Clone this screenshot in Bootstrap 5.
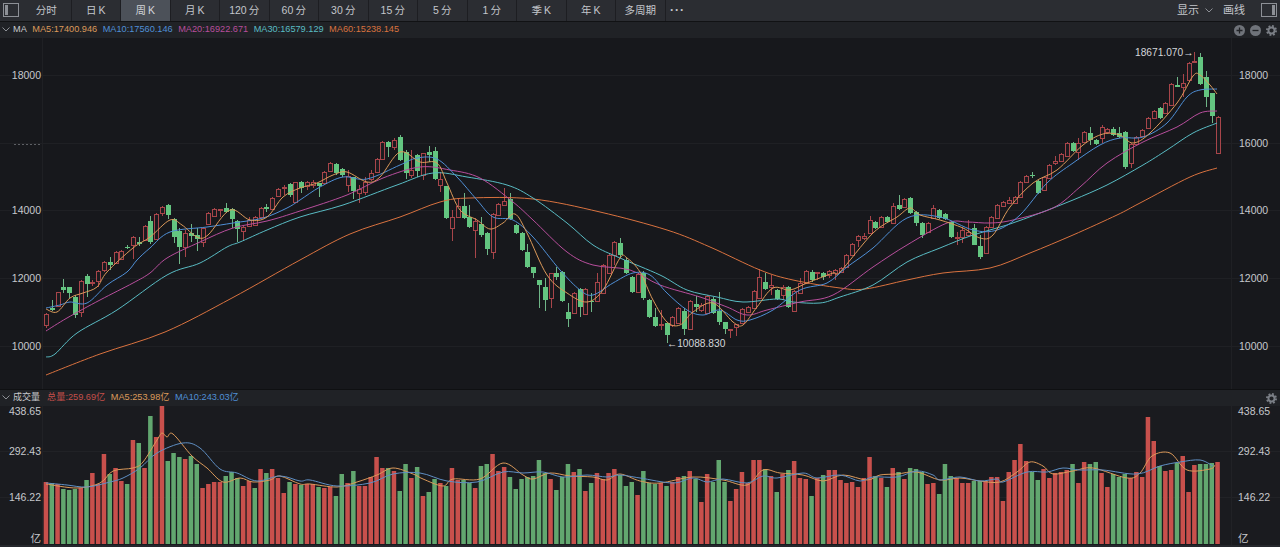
<!DOCTYPE html>
<html lang="zh-CN">
<head>
<meta charset="utf-8">
<title>周K</title>
<link href="https://cdn.jsdelivr.net/npm/bootstrap@5.3.0/dist/css/bootstrap.min.css" rel="stylesheet">
<style>
html,body{height:547px;overflow:hidden;background:#17181c;}
body{font-family:"Liberation Sans","Noto Sans CJK SC",sans-serif;font-size:9.2px;color:#b9bcc2;line-height:1;}
.tool-bar{height:22px;background:#2b2d32;border-bottom:1px solid #111214;}
.tool-tab{width:49.5px;height:21px;padding:0;border:0;border-radius:0;border-right:1px solid #1d1e22;background:transparent;color:#c3c6cb;font-size:10.5px;line-height:21px;font-family:inherit;}
.tool-tab.is-on{background:#4c5159;color:#d2d4d8;}
.tool-more{width:24px;font-weight:700;letter-spacing:1px;border-right:0;font-size:12px;}
.tool-side{width:22px;height:21px;padding:3px 3px;}
.tool-text{color:#c3c6cb;font-size:11px;}
.gap-chev{margin:0 6px;}
.gap-line{margin-right:13px;}
.legend-row{height:16px;background:#202226;padding:0 3px 0 2px;}
.legend-gap{column-gap:5.5px;}
.chev-lead{margin-right:-2.500px;}
.head-vol{font-size:9px;margin-right:1.500px;}
.pane-main{height:351px;background:#17181c;}
.pane-vol{height:139px;background:#1a1b1f;}
.pane-sep{height:1px;background:#0f1012;}
.foot-strip{height:3px;background:#25272c;}
.svg-fill{display:block;width:1280px;height:100%;}
.axis-label{font-family:"Liberation Sans","Noto Sans CJK SC",sans-serif;font-size:10.5px;fill:#c6c8cc;}
.peak-label{font-family:"Liberation Sans",sans-serif;font-size:10.2px;fill:#d4d6da;}
.c-ma5{color:#dc9a5a;}.c-ma10{color:#4f8fd6;}.c-ma20{color:#b84e9c;}.c-ma30{color:#59bcc4;}.c-ma60{color:#d9723f;}.c-tot{color:#c44f4a;}
.c-head{color:#c6c8cc;}
.icon-box{width:16px;height:14px;display:block;}
.icon-round{width:11px;height:11px;display:block;}
.ic-wrap{column-gap:5px;}
.chev{width:8px;height:5px;display:block;}
</style>
</head>
<body class="m-0">
<div class="tool-bar d-flex align-items-center justify-content-between">
  <div class="d-flex align-items-center">
    <div class="tool-side">
      <svg class="icon-box" viewBox="0 0 16 14"><rect x=".5" y=".5" width="15" height="13" fill="none" stroke="#8d9096"/><rect x="2" y="2" width="3" height="10" fill="#8d9096"/></svg>
    </div>
    <button class="btn tool-tab" type="button">分时</button>
    <button class="btn tool-tab" type="button">日&#8201;K</button>
    <button class="btn tool-tab is-on" type="button">周&#8201;K</button>
    <button class="btn tool-tab" type="button">月&#8201;K</button>
    <button class="btn tool-tab" type="button">120&#8201;分</button>
    <button class="btn tool-tab" type="button">60&#8201;分</button>
    <button class="btn tool-tab" type="button">30&#8201;分</button>
    <button class="btn tool-tab" type="button">15&#8201;分</button>
    <button class="btn tool-tab" type="button">5&#8201;分</button>
    <button class="btn tool-tab" type="button">1&#8201;分</button>
    <button class="btn tool-tab" type="button">季&#8201;K</button>
    <button class="btn tool-tab" type="button">年&#8201;K</button>
    <button class="btn tool-tab" type="button">多周期</button>
    <button class="btn tool-tab tool-more" type="button">···</button>
  </div>
  <div class="d-flex align-items-center">
    <span class="tool-text">显示</span>
    <svg class="chev gap-chev" viewBox="0 0 8 5"><path d="M.5.5 4 4 7.500.5" fill="none" stroke="#8d9096"/></svg>
    <span class="tool-text ms-1 gap-line">画线</span>
    <div class="tool-side">
      <svg class="icon-box" viewBox="0 0 16 14"><rect x=".5" y=".5" width="15" height="13" fill="none" stroke="#8d9096"/><rect x="11" y="2" width="3" height="10" fill="#8d9096"/></svg>
    </div>
  </div>
</div>

<div class="legend-row d-flex align-items-center justify-content-between">
  <div class="d-flex align-items-center legend-gap">
    <svg class="chev chev-lead" viewBox="0 0 8 5"><path d="M.5.5 4 4 7.500.5" fill="none" stroke="#8d9096"/></svg>
    <span class="c-head">MA</span>
    <span class="c-ma5">MA5:17400.946</span>
    <span class="c-ma10">MA10:17560.146</span>
    <span class="c-ma20">MA20:16922.671</span>
    <span class="c-ma30">MA30:16579.129</span>
    <span class="c-ma60">MA60:15238.145</span>
  </div>
  <div class="d-flex align-items-center ic-wrap">
    <svg class="icon-round" viewBox="0 0 11 11"><circle cx="5.500" cy="5.500" r="5.500" fill="#6f737a"/><path d="M2.500 5.500h6M5.500 2.500v6" stroke="#202226" stroke-width="1.300"/></svg>
    <svg class="icon-round" viewBox="0 0 11 11"><circle cx="5.500" cy="5.500" r="5.500" fill="#6f737a"/><path d="M2.500 5.500h6" stroke="#202226" stroke-width="1.300"/></svg>
    <svg class="icon-round" viewBox="0 0 12 12"><circle cx="6" cy="6" r="3.300" fill="none" stroke="#7b7f86" stroke-width="2"/><circle cx="6" cy="6" r="5" fill="none" stroke="#7b7f86" stroke-width="2" stroke-dasharray="2 1.930"/></svg>
  </div>
</div>

<div class="pane-main">
  <svg class="svg-fill" id="mainSvg" viewBox="0 38 1280 351" preserveAspectRatio="none">
    <g stroke="#1f2024" stroke-width="1">
      <path d="M0 75.500H1280M0 143.500H1280M0 210.500H1280M0 278.500H1280M0 346.500H1280"/>
      <path d="M42.500 38V389M1231.500 38V389"/>
    </g>
    <path d="M14 144.500H40" stroke="#5d5f64" stroke-dasharray="2 2"/>
    <g class="axis-label" text-anchor="end">
      <text x="41" y="79">18000</text>
      <text x="41" y="214">14000</text>
      <text x="41" y="282">12000</text>
      <text x="41" y="350">10000</text>
    </g>
    <g class="axis-label">
      <text x="1239" y="79">18000</text>
      <text x="1239" y="147">16000</text>
      <text x="1239" y="214">14000</text>
      <text x="1239" y="282">12000</text>
      <text x="1239" y="350">10000</text>
    </g>
    <g id="candles"></g>
    <g id="maLines" fill="none" stroke-width="1" stroke-linejoin="round"></g>
    <text class="peak-label" x="1135" y="56">18671.070→</text>
    <text class="peak-label" x="667" y="347">←10088.830</text>
  </svg>
</div>
<div class="pane-sep"></div>
<div class="legend-row d-flex align-items-center justify-content-between">
  <div class="d-flex align-items-center legend-gap">
    <svg class="chev chev-lead" viewBox="0 0 8 5"><path d="M.5.5 4 4 7.500.5" fill="none" stroke="#8d9096"/></svg>
    <span class="c-head head-vol">成交量</span>
    <span class="c-tot">总量:259.69亿</span>
    <span class="c-ma5">MA5:253.98亿</span>
    <span class="c-ma10">MA10:243.03亿</span>
  </div>
  <svg class="icon-round" viewBox="0 0 12 12"><circle cx="6" cy="6" r="3.300" fill="none" stroke="#7b7f86" stroke-width="2"/><circle cx="6" cy="6" r="5" fill="none" stroke="#7b7f86" stroke-width="2" stroke-dasharray="2 1.930"/></svg>
</div>
<div class="pane-vol">
  <svg class="svg-fill" id="volSvg" viewBox="0 406 1280 139" preserveAspectRatio="none">
    <path d="M0 451.500H1280M0 497.500H1280M42.500 406V545M1231.500 406V545" stroke="#212226"/>
    <g class="axis-label" text-anchor="end">
      <text x="41" y="415">438.65</text>
      <text x="41" y="455">292.43</text>
      <text x="41" y="501">146.22</text>
      <text x="41" y="542">亿</text>
    </g>
    <g class="axis-label">
      <text x="1238" y="415">438.65</text>
      <text x="1238" y="455">292.43</text>
      <text x="1238" y="501">146.22</text>
      <text x="1238" y="542">亿</text>
    </g>
    <g id="volBars"></g>
    <g id="volLines" fill="none" stroke-width="1" stroke-linejoin="round"></g>
  </svg>
</div>
<div class="foot-strip"></div>

<script src="https://cdn.jsdelivr.net/npm/bootstrap@5.3.0/dist/js/bootstrap.bundle.min.js"></script>
<script>
/* candle: kind, body top, body bottom, wick top, wick bottom (pixels) */
var K="r314,325,313,328 g308,310,300,311 r292,306,292,306 g287,290,279,293 g287,293,287,298 g297,315,295,318 r281,312,280,317 g276,284,274,297 r282,283,280,286 r271,281,270,287 r262,270,261,272 g262,265,257,270 r252,263,251,264 r251,259,250,260 g247,248,245,249 r237,245,236,259 g242,244,237,246 r226,240,225,241 g221,242,216,244 r214,239,213,240 r207,213,206,216 g205,215,204,219 g219,237,218,243 g231,247,228,264 r233,247,230,257 g233,236,224,242 g235,239,228,251 r228,242,228,247 r213,224,212,225 r209,216,208,217 r209,210,209,217 g208,212,203,213 g209,219,208,228 g221,229,220,242 r227,231,225,241 r220,226,217,227 r217,225,216,226 r208,217,207,218 g207,209,204,212 r198,209,197,210 r189,196,188,197 r187,188,185,195 g184,195,183,197 r182,202,182,203 g182,188,181,193 r182,186,181,190 r182,185,180,188 g183,186,183,197 r172,183,171,184 r163,171,162,172 g164,173,163,175 g169,175,168,177 r176,185,170,192 g177,191,177,199 r189,193,185,203 r182,192,177,195 r173,179,170,181 r159,172,158,173 r142,159,141,160 g142,147,141,157 r140,147,138,150 g137,160,135,161 g152,173,150,179 r170,175,150,178 g155,171,154,177 r153,175,153,180 g152,155,146,162 g151,179,147,180 r179,185,172,192 g186,218,186,219 r217,228,210,241 r206,217,198,218 g206,218,193,219 g217,227,205,228 r221,230,218,258 g224,235,217,237 g233,249,232,255 r214,252,213,259 r204,215,203,216 r201,205,188,206 g199,219,193,220 g225,233,224,234 g233,250,232,251 g252,267,244,268 g267,273,267,278 g280,285,280,308 g287,300,278,311 r273,298,273,308 g273,277,267,280 g272,301,271,302 g312,319,303,327 r293,313,292,314 g289,307,288,317 r289,314,288,315 g301,302,293,312 r282,301,273,302 r265,293,264,294 r255,273,254,274 r242,255,241,265 g243,255,238,258 g260,273,258,274 g277,292,276,293 r274,292,273,293 g273,298,271,300 g300,317,299,318 g317,326,308,327 r324,325,310,330 g323,335,323,343 r317,325,316,327 r308,323,307,324 g311,329,308,335 r301,329,300,330 g304,307,296,312 r305,310,303,312 r296,313,295,314 g299,313,297,314 g311,322,292,325 g322,329,322,334 r329,330,329,338 r324,327,324,336 r309,323,308,324 r307,312,306,313 r291,308,290,309 r277,298,269,298 g282,289,273,290 r285,287,275,295 g290,299,289,300 r287,295,285,300 g287,307,286,308 r291,311,290,312 r283,293,278,294 r271,283,270,284 g272,280,270,282 r272,273,272,280 g273,277,272,280 r271,275,270,278 r270,273,269,280 r268,272,267,273 r255,267,254,268 r244,255,243,256 r236,240,235,247 r236,238,233,240 r220,233,216,234 g222,228,221,229 r217,227,216,228 g217,222,216,223 r206,223,203,224 g205,209,195,210 r199,207,198,208 g198,213,197,214 g212,223,211,226 g223,235,222,238 r223,232,222,233 r208,218,205,219 g210,218,209,219 g214,219,213,220 g222,237,221,238 r237,238,232,245 r230,237,227,243 r232,235,220,235 g228,245,224,245 g246,257,235,259 r227,253,226,254 r217,227,216,228 r205,218,204,219 r202,206,201,207 r200,203,197,204 r197,203,196,204 r182,197,181,198 r176,182,175,183 g175,176,172,178 g181,193,180,194 r177,190,176,191 r165,178,164,179 r161,163,156,165 r154,161,153,162 r143,156,142,157 g143,151,142,152 r143,152,138,160 r132,142,131,143 g133,140,127,145 g140,144,139,145 r127,138,125,143 r129,132,128,134 g129,135,127,136 g133,137,127,138 g132,167,131,169 r144,163,143,168 r137,144,136,145 r130,136,129,137 r118,128,117,129 r111,118,110,119 g108,118,107,119 r103,113,102,114 r84,105,83,106 g85,87,77,87 r83,87,74,97 r63,80,62,81 r61,62,52,63 g57,84,53,85 g77,97,71,107 g93,116,93,123 r117,153,116,154".split(" ");
var V=[482,483,484,489,490,489,488,480,473,484,454,474,468,481,484,440,443,468,416,437,406,461,453,457,459,456,464,488,484,482,482,476,472,478,486,481,488,469,473,469,478,493,482,484,485,484,484,487,488,487,496,474,483,471,486,486,477,457,468,468,471,491,464,478,467,496,492,479,483,486,468,480,480,483,488,466,464,454,471,467,477,489,479,477,476,460,473,479,490,477,464,472,469,491,483,473,479,473,469,475,486,482,495,471,483,484,483,486,482,477,476,471,479,502,474,482,460,482,501,489,472,483,460,460,469,476,492,474,470,461,478,479,496,478,475,470,470,480,483,482,487,478,457,476,478,487,468,472,479,468,469,472,484,483,494,464,476,478,483,483,481,481,481,477,477,501,472,460,444,461,472,480,469,478,473,472,470,464,483,462,464,462,473,487,474,477,474,478,472,477,417,441,466,471,470,463,456,492,465,464,464,463,462];
function xs(i){return 46+5.8*i;}
var NS="http://www.w3.org/2000/svg";
function mk(p,t,a){var e=document.createElementNS(NS,t);for(var k in a)e.setAttribute(k,a[k]);p.appendChild(e);return e;}
var cg=document.getElementById("candles"),vg=document.getElementById("volBars");
K.forEach(function(s,i){
  var g=s[0]=="g",n=s.slice(1).split(",").map(Number),x=xs(i),col=g?"#63c580":"#a8454a";
  var xr=Math.round(x)+.5;
  mk(cg,"path",{d:"M"+xr+" "+n[2]+"V"+n[3],stroke:g?"#6fb587":"#a8454a","stroke-width":1});
  if(g)mk(cg,"rect",{x:xr-2.5,y:n[0],width:5,height:Math.max(1,n[1]-n[0]),fill:col});
  else mk(cg,"rect",{x:xr-2,y:n[0]+.5,width:4,height:Math.max(1,n[1]-n[0]),fill:"#1b1b1f",stroke:col,"stroke-width":1});
  var vgreen=g||i==36;
  mk(vg,"rect",{x:x-2.3,y:V[i],width:4.5,height:544-V[i],fill:vgreen?"#62a76f":"#c8504c"});
});
function smooth(p){
  var d="M"+p[0][0]+" "+p[0][1];
  for(var i=0;i<p.length-1;i++){
    var a=p[i-1]||p[i],b=p[i],c=p[i+1],e=p[i+2]||c;
    d+="C"+(b[0]+(c[0]-a[0])/6).toFixed(1)+" "+(b[1]+(c[1]-a[1])/6).toFixed(1)+" "+(c[0]-(e[0]-b[0])/6).toFixed(1)+" "+(c[1]-(e[1]-b[1])/6).toFixed(1)+" "+c[0]+" "+c[1];
  }
  return d;
}
function pts(s){return s.trim().split(/\s+/).map(function(q){return q.split(",").map(Number);});}
var ML=document.getElementById("maLines");
[
 ["#d9723f","46,375 100,354 165,332 232,298 300,260 350,234 400,217 440,202 470,198 533,199 600,212 667,230 710,247 760,270 793,280 840,288 865,289 907,280 943,273 990,268 1030,253 1073,235 1117,215 1140,203 1190,177 1217,168"],
 ["#59bcc4","46,357 55,354 77,333 117,310 167,275 200,263 227,247 240,242 267,230 300,217 343,205 397,185 433,173 467,177 507,185 533,198 567,223 593,245 620,258 660,275 687,290 717,297 743,302 777,299 793,302 820,303 840,297 873,285 907,262 940,248 973,235 1007,225 1040,213 1073,200 1107,185 1143,165 1167,150 1193,133 1217,123"],
 ["#b84e9c","46,331 67,318 100,300 133,283 150,273 167,258 200,242 233,228 267,221 300,211 347,195 383,178 420,167 450,170 480,178 513,202 533,220 567,252 593,265 630,270 660,285 700,297 727,307 747,315 767,310 800,302 833,295 873,267 907,245 947,223 967,222 990,223 1013,220 1053,208 1080,187 1107,163 1143,142 1177,127 1200,113 1217,111"],
 ["#4f8fd6","46,308 60,305 70,302 87,303 107,285 127,272 137,260 150,248 170,232 207,227 233,223 263,218 287,208 300,200 320,187 343,177 367,179 400,165 417,158 437,159 457,177 477,200 493,217 513,220 533,237 560,270 580,290 593,295 613,283 633,273 650,275 667,293 687,310 703,315 720,310 737,320 750,320 773,310 800,290 827,283 847,267 873,248 907,218 940,217 973,230 997,230 1020,215 1047,183 1073,163 1100,145 1120,138 1143,137 1167,123 1187,97 1200,90 1217,89"],
 ["#dc9a5a","46,309 57,312 70,298 83,293 97,287 107,272 133,248 150,237 170,220 182,225 197,237 208,235 230,210 250,220 267,217 283,197 300,188 317,183 333,175 347,172 367,182 380,177 400,152 420,162 437,163 447,183 460,210 477,220 490,229 503,223 515,214 527,233 547,275 567,293 587,302 603,290 620,258 627,258 640,272 653,300 667,322 680,325 693,312 713,303 733,322 743,325 757,307 773,288 790,290 807,283 833,273 840,272 873,233 897,217 910,208 920,215 940,220 963,228 980,238 993,235 1010,207 1033,183 1057,170 1083,145 1103,134 1120,135 1133,143 1150,133 1177,103 1193,76 1200,75 1210,85 1217,94"]
].forEach(function(m){mk(ML,"path",{d:smooth(pts(m[1])),stroke:m[0]});});
var VL=document.getElementById("volLines");
[
 ["#dc9a5a","46,484 77,488 100,483 113,471 133,468 143,462 157,440 162,433 167,437 173,434 192,456 207,468 223,482 240,478 253,482 270,480 280,476 300,484 310,484 337,487 357,482 377,475 393,468 413,474 423,479 443,486 453,479 480,479 503,463 523,475 533,479 550,473 570,476 593,477 607,480 620,474 640,481 660,483 693,477 723,480 747,485 763,470 780,473 803,475 823,481 843,475 867,480 880,475 897,474 917,472 940,480 960,478 980,481 1000,482 1017,472 1030,462 1043,466 1053,474 1073,471 1093,468 1127,478 1140,473 1152,456 1170,453 1187,470 1210,469 1215,465"],
 ["#5f8fc4","46,483 67,485 87,487 110,482 123,478 140,468 157,453 183,443 200,448 220,469 237,473 257,481 280,476 300,481 310,480 337,486 370,483 393,474 420,473 447,481 477,482 503,472 523,473 543,472 563,477 587,475 607,477 620,475 640,478 673,483 693,478 707,482 723,479 747,483 763,476 777,478 803,473 817,478 840,475 860,481 873,477 897,477 917,471 933,475 940,480 960,477 980,481 997,479 1003,482 1027,472 1047,472 1063,468 1080,470 1103,470 1137,474 1160,466 1180,462 1200,460 1213,466"]
].forEach(function(m){mk(VL,"path",{d:smooth(pts(m[1])),stroke:m[0]});});
</script>
</body>
</html>
